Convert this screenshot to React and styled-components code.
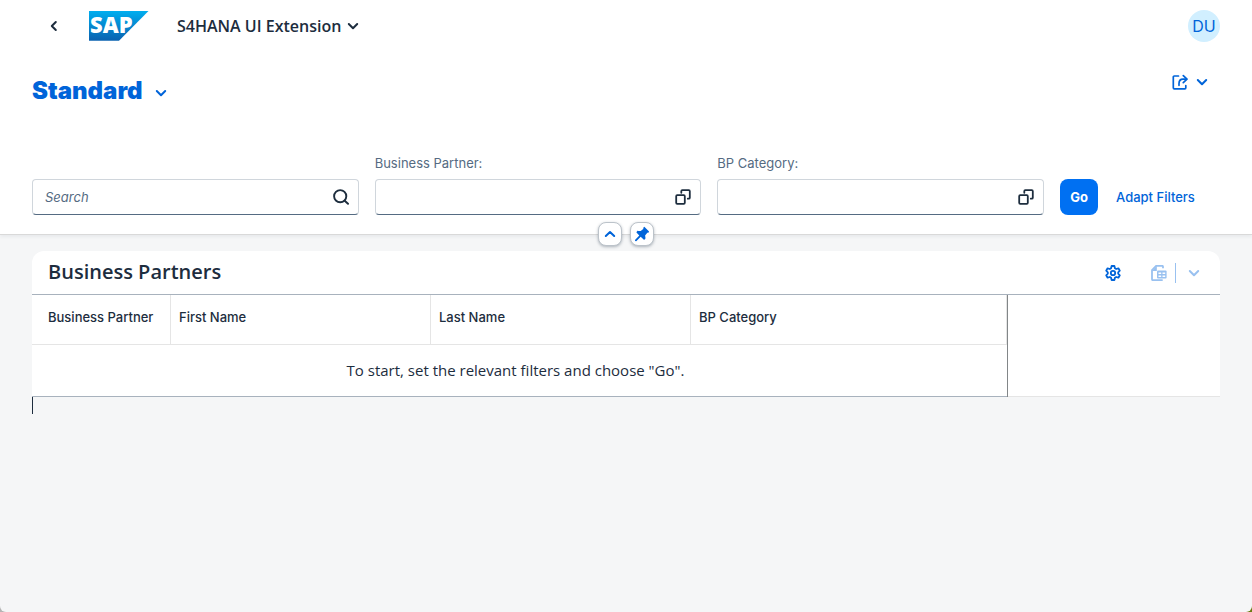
import React from 'react';
import styled, { createGlobalStyle, css } from 'styled-components';

const color = {
  text: '#1d2d3e',
  label: '#556b82',
  link: '#0064d9',
  brand: '#0070f2',
  page: '#f5f6f7',
  line: '#e5e5e5',
  rule: '#a8b2bd',
};
const ui = 'Inter, "Noto Sans", sans-serif';
const wide = '"Open Sans", "Noto Sans", sans-serif';

const GlobalStyle = createGlobalStyle`
  *, *::before, *::after { box-sizing: border-box; }
  html { background: linear-gradient(90deg, #b4b4b4 50%, #6b7a12 50%); }
  body { margin: 0; font-family: ${ui}; font-size: 13px; line-height: 20px; color: ${color.text}; }
  h1, h2 { margin: 0; }
`;

const Page = styled.div`
  display: flex;
  flex-direction: column;
  min-height: 100vh;
  background: ${color.page};
  border-radius: 0 0 6px 6px;
`;

const bare = css`
  display: inline-flex;
  align-items: center;
  justify-content: center;
  padding: 0;
  border: 0;
  background: none;
  color: inherit;
  font: inherit;
  cursor: pointer;
`;

const ShellBar = styled.header`
  display: flex;
  align-items: center;
  height: 52px;
  padding: 0 32px 0 36px;
  background: #fff;
`;

const IconButton = styled.button`
  ${bare}
  width: ${(p) => p.$width || 36}px;
  height: 36px;
  color: ${(p) => p.$color || color.text};
`;

const LogoLink = styled.a`
  display: flex;
  margin-left: 17px;
`;

const ShellTitle = styled.button`
  ${bare}
  gap: 6px;
  margin-left: 28px;
  font: 600 16px/24px ${wide};
`;

const Avatar = styled.button`
  ${bare}
  width: 32px;
  height: 32px;
  margin-left: auto;
  border-radius: 50%;
  background: #d1efff;
  color: ${color.link};
  font: 400 16px/24px ${ui};
`;

const PageHeader = styled.section`
  position: relative;
  background: #fff;
  border-bottom: 1px solid #d9d9d9;
  box-shadow: 0 2px 3px rgba(34, 53, 72, 0.06);
  padding: 12px 32px 19px;
`;

const TitleRow = styled.div`
  display: flex;
  justify-content: space-between;
  align-items: flex-start;
`;

const VariantTitle = styled.h1`
  font-size: 24px;
  line-height: 32px;
  font-weight: 900;
  padding-top: 11px;
`;

const VariantButton = styled.button`
  ${bare}
  gap: 12px;
  color: ${color.link};

  svg { margin-top: 4px; }
`;

const ShareButton = styled.button`
  ${bare}
  gap: 8px;
  height: 36px;
  padding-right: 12px;
  color: ${color.link};
`;

const FilterBar = styled.form`
  display: flex;
  align-items: flex-end;
  gap: 16px;
  padding-top: 46px;
`;

const Field = styled.div`
  flex: 1 1 0;
  min-width: 0;
`;

const FieldLabel = styled.label`
  display: block;
  margin-bottom: 6px;
  color: ${color.label};
`;

const InputBox = styled.div`
  display: flex;
  align-items: center;
  height: 36px;
  border: 1px solid #d0d6dc;
  border-bottom-color: ${color.label};
  border-radius: 4px;
  background: #fff;
`;

const TextInput = styled.input`
  flex: 1;
  min-width: 0;
  height: 100%;
  padding: 0 0 0 12px;
  border: 0;
  outline: 0;
  background: none;
  color: ${color.text};
  font: 400 13px/20px ${ui};

  &::placeholder { color: ${color.label}; font-style: italic; opacity: 1; }
`;

const FilterActions = styled.div`
  display: flex;
  width: 160px;
`;

const GoButton = styled.button`
  ${bare}
  width: 38px;
  height: 36px;
  border-radius: 8px;
  background: ${color.brand};
  color: #fff;
  font-weight: 700;
`;

const AdaptButton = styled.button`
  ${bare}
  height: 36px;
  padding: 0 18px;
  color: ${color.link};
  font-weight: 500;
  white-space: nowrap;
`;

const HeaderToggles = styled.div`
  position: absolute;
  left: 0;
  right: 0;
  bottom: -12px;
  display: flex;
  justify-content: center;
  gap: 8px;
`;

const ToggleButton = styled.button`
  ${bare}
  width: 24px;
  height: 24px;
  border: 1px solid #bcc3ca;
  border-radius: 8px;
  background: #fff;
  color: ${color.link};
  box-shadow: 0 1px 3px rgba(34, 53, 72, 0.35);
`;

const Content = styled.main`
  padding: 16px 32px;
`;

const Card = styled.section`
  background: #fff;
  border-radius: 12px 12px 0 0;
  border-bottom: 1px solid ${color.line};
`;

const Toolbar = styled.div`
  display: flex;
  align-items: center;
  height: 44px;
  padding: 0 8px 0 16px;
  border-bottom: 1px solid ${color.rule};
`;

const TableTitle = styled.h2`
  margin-right: auto;
  padding-bottom: 2px;
  font: 600 20px/24px ${wide};
`;

const ExportGroup = styled.div`
  display: flex;
  align-items: center;
  margin-left: 12px;
  color: #99c1f0;
`;

const Divider = styled.span`
  width: 1px;
  height: 20px;
  background: currentColor;
`;

const Table = styled.table`
  width: 976px;
  max-width: 100%;
  margin-bottom: -1px;
  table-layout: fixed;
  border-collapse: separate;
  border-spacing: 0;
  border-right: 1px solid #828688;
`;

const HeadCell = styled.th`
  width: ${(p) => p.$width};
  height: 50px;
  padding: 12px 8px 0;
  border-right: 1px solid ${color.line};
  border-bottom: 1px solid ${color.line};
  font-weight: 500;
  text-align: left;
  vertical-align: top;

  &:first-child { padding-left: 16px; }
`;

const EmptyCell = styled.td`
  height: 52px;
  padding: 0 16px 2px 8px;
  border-bottom: 1px solid ${color.rule};
  font: 400 15px/20px ${wide};
  text-align: center;
`;

const Caret = styled.div`
  width: 1px;
  height: 17px;
  background: ${color.text};
`;

const Stroke = ({ size = 16, width = 2, children, ...rest }) => (
  <svg width={size} height={size} viewBox={`0 0 ${size} ${size}`} fill="none" stroke="currentColor"
    strokeWidth={width} strokeLinecap="round" strokeLinejoin="round" aria-hidden="true" {...rest}>
    {children}
  </svg>
);

const ChevronDown = () => <Stroke size={12}><path d="M1.8 4 6 8.2 10.2 4" /></Stroke>;
const ChevronUp = () => <Stroke size={12}><path d="M1.8 8 6 4 10.2 8" /></Stroke>;
const ChevronLeft = () => <Stroke size={12}><path d="M7.8 2 3.8 6l4 4" /></Stroke>;
const SearchIcon = () => (
  <Stroke width={1.9}><circle cx="7.2" cy="7.2" r="6.1" /><path d="m11.7 11.7 3.3 3.1" /></Stroke>
);
const ValueHelpIcon = () => (
  <Stroke width={1.8}>
    <rect x="1.2" y="6.2" width="8.6" height="8.6" rx="1" />
    <path d="M6.3 3.8V2.2a1 1 0 0 1 1-1h6.5a1 1 0 0 1 1 1v6.5a1 1 0 0 1-1 1h-1" />
  </Stroke>
);
const ShareIcon = () => (
  <Stroke width={1.7}>
    <path d="M6.500 2H2.300a1 1 0 0 0-1 1v10.800a1 1 0 0 0 1 1h10.500a1 1 0 0 0 1-1V11.500" />
    <path d="M7 11.300V9.500C7 6.800 8.500 5.200 11 5.200h3" />
    <path d="m11.300 1.700 3.700 3.500-3.700 3.500" />
  </Stroke>
);
const PinIcon = () => (
  <svg width="16" height="16" viewBox="0 0 16 16" fill="currentColor" aria-hidden="true">
    <path d="M9.6 1.2a.8.8 0 0 1 1.2 0l4 4a.8.8 0 0 1-.2 1.2l-1.3.4-2.2 2.6.4 2.6c0 .5-.1.8-.4 1.1l-.5.4a.7.7 0 0 1-1 0L6.7 10.8 2.5 14.9c-.9.8-2-.4-1.3-1.2L5.3 9.4 2.7 6.7a.7.7 0 0 1 0-1l.4-.4c.3-.3.6-.5 1.1-.4l2.5.2 2.5-2.1z" />
  </svg>
);
const GearIcon = () => (
  <Stroke width={1.8}>
    <path d="M6.6 1h2.8l.5 2.2 1.3.8 2.2-.7 1.4 2.4L13.2 7.3v1.4l1.6 1.6-1.4 2.4-2.2-.7-1.3.8-.5 2.2H6.6l-.5-2.2-1.3-.8-2.2.7-1.4-2.4L2.8 8.7V7.3L1.2 5.7l1.4-2.4 2.2.7 1.3-.8z" />
    <circle cx="8" cy="8" r="2.200" />
  </Stroke>
);
const SpreadsheetIcon = () => (
  <svg width="16" height="16" viewBox="0 0 16 16" aria-hidden="true">
    <path d="M12 3.300V1.800a1 1 0 0 0-1-1H5.200L1 5.200v9a1 1 0 0 0 1 1h9.700" fill="none" stroke="currentColor" strokeWidth="1.800" />
    <path d="M5.800 1v5H1z" fill="currentColor" />
    <rect x="6" y="5.500" width="9.600" height="8" rx="1" fill="currentColor" />
    <path d="M7.500 7.500h2.700v1.500H7.500zM11.500 7.500h2.700v1.500h-2.700zM7.500 10.500h2.700V12H7.500zM11.500 10.500h2.700V12h-2.700z" fill="#fff" />
  </svg>
);
const SapLogo = () => (
  <svg width="60" height="30" viewBox="0 0 60 30" role="img" aria-label="SAP">
    <defs>
      <linearGradient id="sap" x1="0" y1="0" x2="0" y2="1">
        <stop offset="0" stopColor="#00aeef" />
        <stop offset="1" stopColor="#0a62b0" />
      </linearGradient>
    </defs>
    <path d="M0 0h59.500L30 29.700H0z" fill="url(#sap)" />
    <text x="1" y="22" fill="#fff" fontFamily='"Open Sans", sans-serif' fontWeight="800" fontSize="22">SAP</text>
  </svg>
);

const columns = [
  ['Business Partner', '139px'],
  ['First Name', '260px'],
  ['Last Name', '260px'],
  ['BP Category', 'auto'],
];

const ValueHelpField = ({ id, label }) => (
  <Field>
    <FieldLabel htmlFor={id}>{label}</FieldLabel>
    <InputBox>
      <TextInput id={id} type="text" />
      <IconButton type="button" $width={34} aria-label={`Value help for ${label}`}><ValueHelpIcon /></IconButton>
    </InputBox>
  </Field>
);

export default function App() {
  return (
    <>
      <GlobalStyle />
      <Page>
        <ShellBar>
          <IconButton aria-label="Back"><ChevronLeft /></IconButton>
          <LogoLink href="#"><SapLogo /></LogoLink>
          <ShellTitle>S4HANA UI Extension<ChevronDown /></ShellTitle>
          <Avatar aria-label="User profile">DU</Avatar>
        </ShellBar>

        <PageHeader>
          <TitleRow>
            <VariantTitle>
              <VariantButton>Standard<ChevronDown /></VariantButton>
            </VariantTitle>
            <ShareButton aria-label="Share"><ShareIcon /><ChevronDown /></ShareButton>
          </TitleRow>

          <FilterBar onSubmit={(e) => e.preventDefault()}>
            <Field>
              <InputBox>
                <TextInput type="search" placeholder="Search" aria-label="Search" />
                <IconButton type="submit" $width={34} aria-label="Search"><SearchIcon /></IconButton>
              </InputBox>
            </Field>
            <ValueHelpField id="business-partner" label="Business Partner:" />
            <ValueHelpField id="bp-category" label="BP Category:" />
            <FilterActions>
              <GoButton type="submit">Go</GoButton>
              <AdaptButton type="button">Adapt Filters</AdaptButton>
            </FilterActions>
          </FilterBar>

          <HeaderToggles>
            <ToggleButton aria-label="Collapse header"><ChevronUp /></ToggleButton>
            <ToggleButton aria-label="Pin header"><PinIcon /></ToggleButton>
          </HeaderToggles>
        </PageHeader>

        <Content>
          <Card>
            <Toolbar>
              <TableTitle>Business Partners</TableTitle>
              <IconButton $color={color.link} aria-label="Settings"><GearIcon /></IconButton>
              <ExportGroup>
                <IconButton $color="inherit" $width={32} disabled aria-label="Export to spreadsheet"><SpreadsheetIcon /></IconButton>
                <Divider />
                <IconButton $color="inherit" disabled aria-label="Export options"><ChevronDown /></IconButton>
              </ExportGroup>
            </Toolbar>
            <Table aria-label="Business Partners">
              <thead>
                <tr>
                  {columns.map(([name, width]) => (
                    <HeadCell key={name} scope="col" $width={width}>{name}</HeadCell>
                  ))}
                </tr>
              </thead>
              <tbody>
                <tr>
                  <EmptyCell colSpan={columns.length}>
                    To start, set the relevant filters and choose "Go".
                  </EmptyCell>
                </tr>
              </tbody>
            </Table>
          </Card>
          <Caret />
        </Content>
      </Page>
    </>
  );
}
